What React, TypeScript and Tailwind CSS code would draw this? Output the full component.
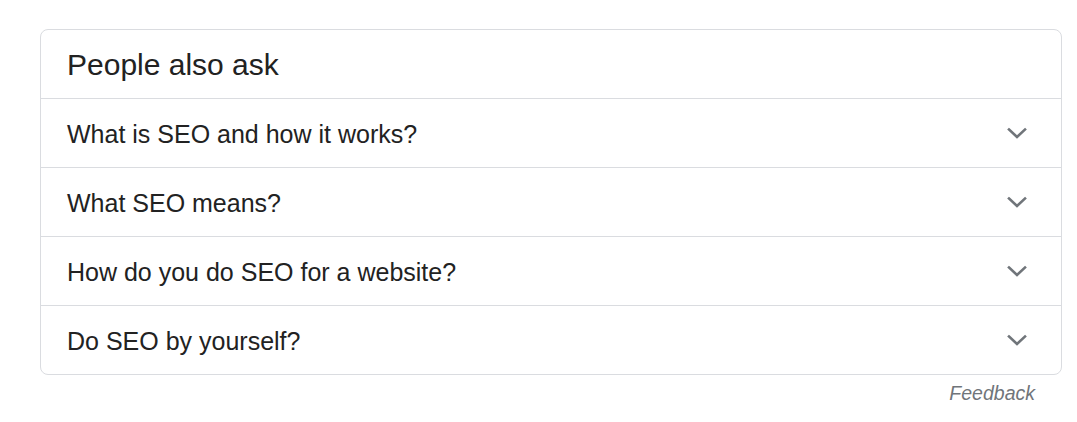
const questions = [
  'What is SEO and how it works?',
  'What SEO means?',
  'How do you do SEO for a website?',
  'Do SEO by yourself?',
];

function Chevron() {
  return (
    <svg width="20" height="12" viewBox="0 0 20 12" className="text-[#70757a]">
      <path
        d="M2 2.5 10 10 18 2.5"
        fill="none"
        stroke="currentColor"
        strokeWidth="2.6"
        strokeLinecap="square"
      />
    </svg>
  );
}

export default function App() {
  return (
    <div className="min-h-[422px] bg-white pt-[29px] pl-10 pr-4 font-['Liberation_Sans',Arial,sans-serif] text-[#222]">
      <div className="w-[1022px] rounded-lg border border-[#dadce0]">
        <div className="flex h-[68px] items-center px-[26px] pt-[2px] text-[30px] leading-none">
          People also ask
        </div>
        {questions.map((q) => (
          <div
            key={q}
            className="flex h-[69px] items-center justify-between border-t border-[#dadce0] pl-[26px] pr-[34px] text-[25px] leading-none"
          >
            <span className="pt-[2px]">{q}</span>
            <Chevron />
          </div>
        ))}
      </div>
      <div className="w-[995px] pt-[9px] text-right text-[19.5px] leading-none italic text-[#70757a]">
        Feedback
      </div>
    </div>
  );
}
